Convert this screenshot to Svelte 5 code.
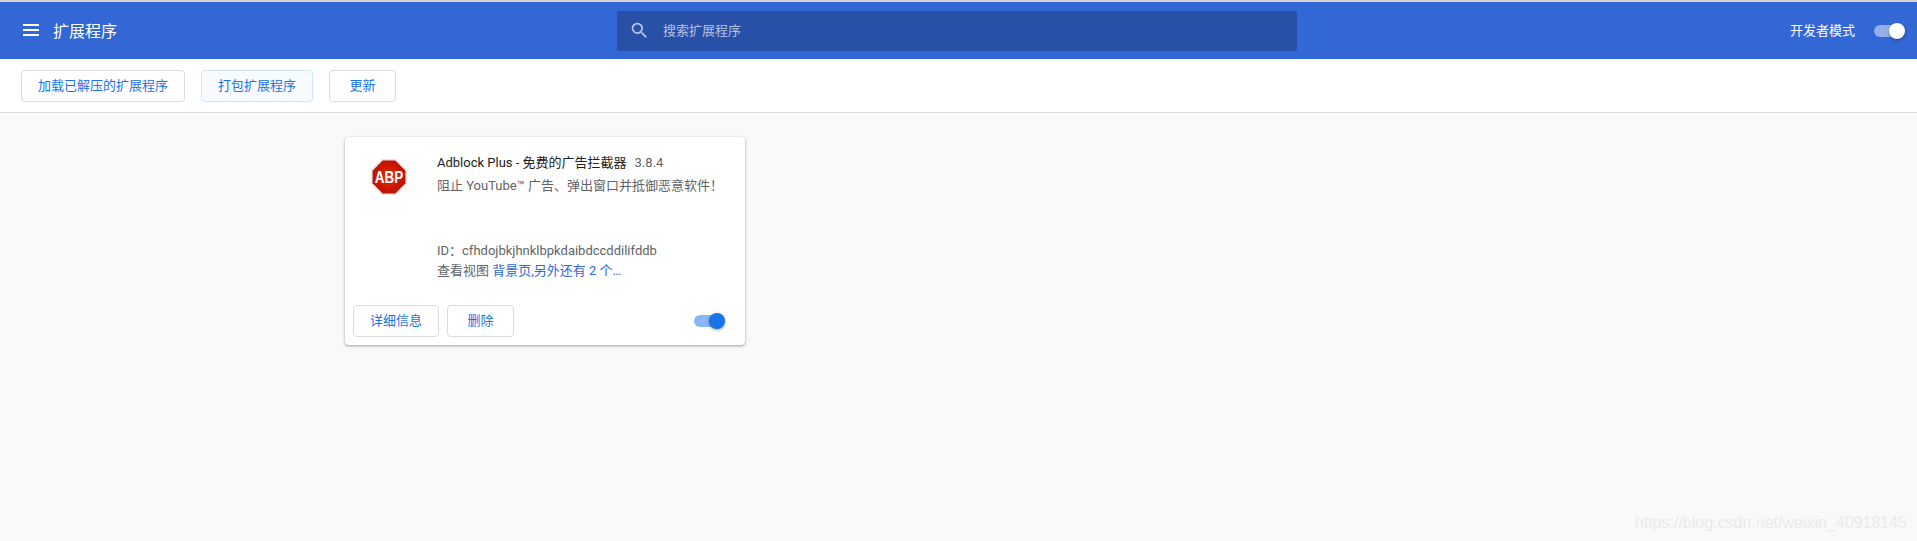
<script>
    const name = 'Adblock Plus - 免费的广告拦截器';
    const version = '3.8.4';
    const description = '阻止 YouTube™ 广告、弹出窗口并抵御恶意软件！';
    const extId = 'cfhdojbkjhnklbpkdaibdccddilifddb';
</script>

<div class="page">
    <div class="topline"></div>
    <header>
        <div class="title-side">
            <svg class="menu-icon" width="16" height="12" viewBox="0 0 16 12"><path d="M0 0h16v2H0zM0 5h16v2H0zM0 10h16v2H0z" fill="#fff"/></svg>
            <h1>扩展程序</h1>
        </div>
        <div class="search">
            <svg width="21" height="21" viewBox="0 0 24 24"><path d="M15.5 14h-.79l-.28-.27A6.47 6.47 0 0 0 16 9.5 6.5 6.5 0 1 0 9.5 16c1.61 0 3.09-.59 4.23-1.57l.27.28v.79l5 4.99L20.49 19l-4.99-5zm-6 0C7.01 14 5 11.99 5 9.5S7.01 5 9.5 5 14 7.01 14 9.5 11.99 14 9.5 14z" fill="#b3c3e6"/></svg>
            <span>搜索扩展程序</span>
        </div>
        <div class="dev-side">
            <span>开发者模式</span>
            <div class="toggle on-white"><i></i></div>
        </div>
    </header>

    <div class="toolbar">
        <button>加载已解压的扩展程序</button>
        <button class="hovered">打包扩展程序</button>
        <button class="wide">更新</button>
    </div>

    <main>
        <div class="card">
            <div class="card-body">
                <svg class="abp" width="36" height="36" viewBox="0 0 36 36">
                    <defs>
                        <radialGradient id="red" cx="50%" cy="50%" r="60%">
                            <stop offset="0" stop-color="#e52a00"/>
                            <stop offset="1" stop-color="#b80b00"/>
                        </radialGradient>
                    </defs>
                    <polygon points="11,0 25,0 36,11 36,25 25,36 11,36 0,25 0,11" fill="#e4e4e4"/>
                    <polygon points="11.7,1.6 24.3,1.6 34.4,11.7 34.4,24.3 24.3,34.4 11.7,34.4 1.6,24.3 1.6,11.7" fill="url(#red)"/>
                    <text x="18" y="19.4" text-anchor="middle" transform="scale(1 1.24)">ABP</text>
                </svg>
                <div class="info">
                    <div class="name-row"><span class="name">{name}</span><span class="version">{version}</span></div>
                    <div class="desc">{description}</div>
                    <div class="id">ID：{extId}</div>
                    <div class="views">查看视图 <a href="#top">背景页,另外还有 2 个…</a></div>
                </div>
            </div>
            <div class="card-foot">
                <button>详细信息</button>
                <button class="wide">删除</button>
                <div class="toggle blue"><i></i></div>
            </div>
        </div>
    </main>

    <div class="watermark">https://blog.csdn.net/weixin_40918145</div>
</div>

<style>
    :global(body) { margin: 0; }
    .page {
        position: relative;
        height: 541px;
        overflow: hidden;
        background: #f8f9fa;
        font-family: Roboto, "Noto Sans CJK SC", sans-serif;
        font-size: 13px;
        color: #5f6368;
    }
    .topline { height: 3px; background: linear-gradient(#d4d4d4 0 2px, #3367d6 2px); }

    header {
        height: 56px;
        background: #3367d6;
        display: grid;
        grid-template-columns: 617px 680px 1fr;
        align-items: center;
        color: #fff;
    }
    .title-side { display: flex; align-items: center; padding: 0 0 3px 23px; }
    .menu-icon { margin-right: 14px; }
    h1 { margin: 0; font-size: 16px; font-weight: 400; }
    .search {
        height: 40px;
        background: #2850a7;
        border-radius: 2px;
        display: flex;
        align-items: center;
        padding-left: 12px;
        color: #b3c3e6;
    }
    .search svg { margin-bottom: 2px; }
    .search span { margin: 0 0 3px 13px; }
    .dev-side { display: flex; align-items: center; justify-content: flex-end; padding: 0 13px 3px 0; }
    .dev-side span { margin-right: 19px; }

    .toggle { position: relative; width: 30px; height: 12px; border-radius: 6px; }
    .toggle i {
        position: absolute;
        right: -1px;
        top: -2px;
        width: 16px;
        height: 16px;
        border-radius: 50%;
        box-shadow: 0 1px 3px rgba(0, 0, 0, 0.4);
    }
    .on-white { background: #94b0e8; margin-top: 3px; }
    .on-white i { background: #fff; }
    .blue { background: #8ab8f6; }
    .blue i { background: #1a73e8; }

    .toolbar {
        height: 53px;
        background: #fff;
        border-bottom: 1px solid #dadce0;
        display: flex;
        align-items: center;
        gap: 16px;
        padding-left: 21px;
    }
    button {
        height: 32px;
        padding: 0 16px 3px;
        box-sizing: border-box;
        background: #fff;
        border: 1px solid #dadce0;
        border-radius: 4px;
        font: inherit;
        color: #1a73e8;
    }
    button.wide { width: 67px; padding: 0 0 3px; }
    .hovered { background: #f8fbff; border-color: #d2e3fc; }

    main { padding: 24px 0 0 345px; }
    .card {
        width: 400px;
        height: 208px;
        background: #fff;
        border-radius: 4px;
        box-shadow: 0 1px 2px rgba(60, 64, 67, 0.3), 0 1px 3px 1px rgba(60, 64, 67, 0.15);
        display: flex;
        flex-direction: column;
        justify-content: space-between;
    }
    .card-body { display: flex; padding: 22px 20px 0 26px; }
    .abp { flex: none; margin-right: 30px; }
    .abp text { font: 700 13.5px "Liberation Sans", sans-serif; fill: #fff; }
    .info { line-height: 20px; margin-top: -6px; }
    .name { color: #202124; }
    .version { margin-left: 8px; }
    .desc { margin-top: 3px; height: 45px; }
    .id { margin-top: 20px; }
    a { color: #3367d6; text-decoration: none; }
    .card-foot { display: flex; align-items: center; gap: 8px; padding: 0 21px 8px 8px; }
    .card-foot .toggle { margin-left: auto; }

    .watermark {
        position: absolute;
        right: 10px;
        bottom: 9px;
        font: 16px "Liberation Sans", sans-serif;
        color: #e9eaec;
    }
</style>
